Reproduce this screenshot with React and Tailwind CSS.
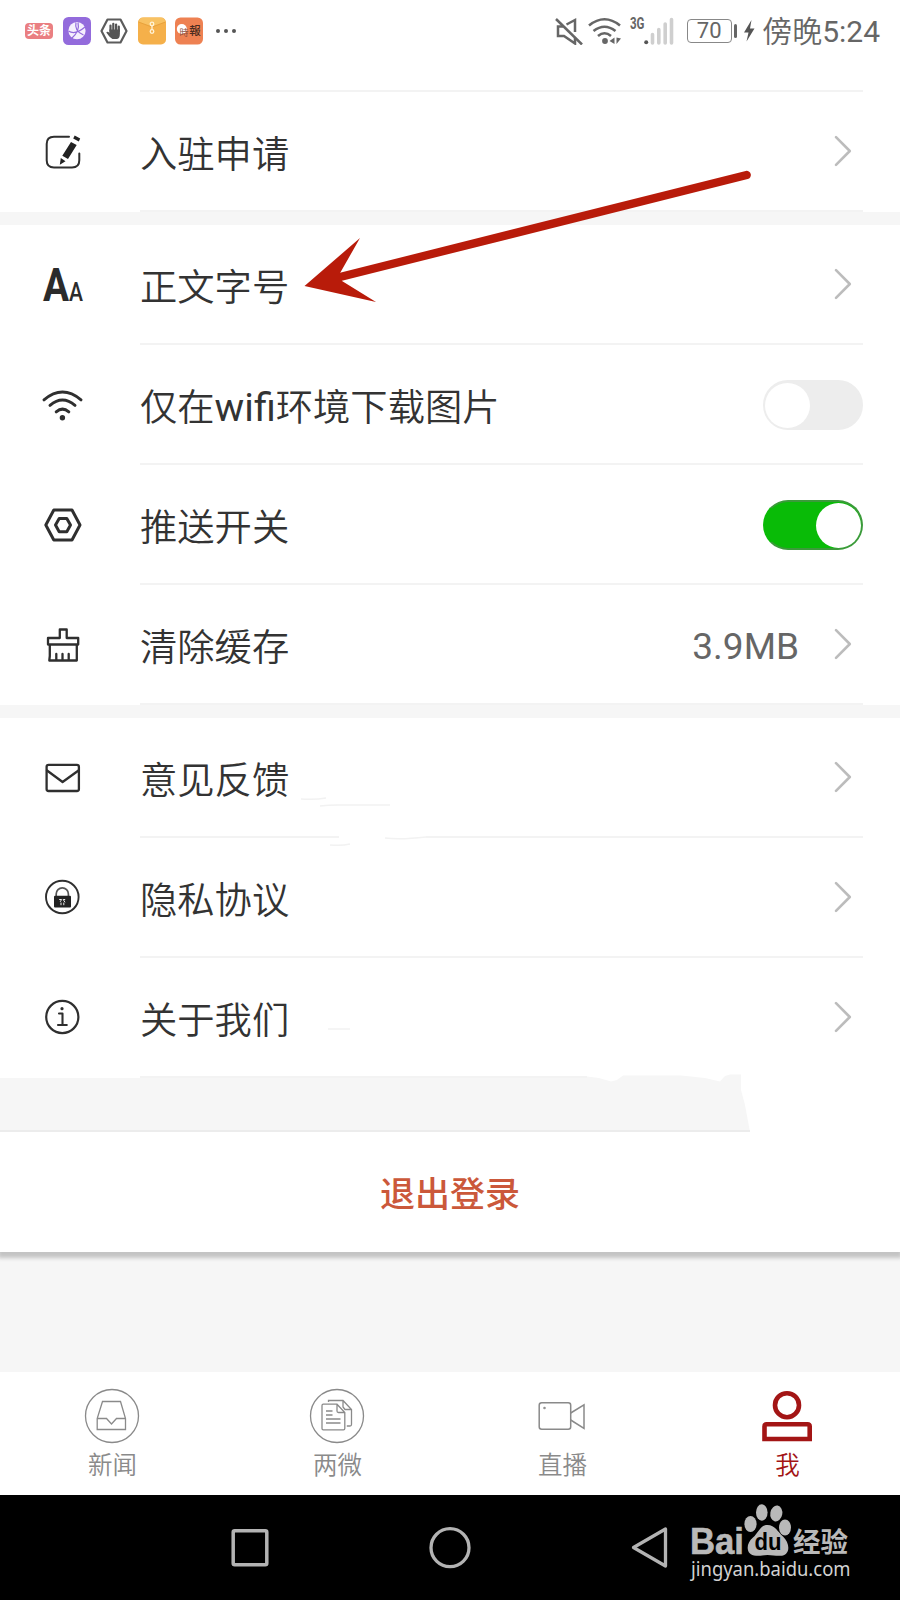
import React from 'react';

const cjk = "font-[Roboto,'Noto_Sans_CJK_SC',sans-serif]";

/* ---------- row icons ---------- */

const RowIcon = ({ children }) => (
  <svg width="42" height="40" viewBox="0 0 42 40" fill="none" stroke="#2f2f2f" strokeLinejoin="round" strokeLinecap="round" className="shrink-0 overflow-visible">
    {children}
  </svg>
);

const EditIcon = () => (
  <RowIcon>
    <path d="M27 4.8H12Q4.7 4.8 4.7 12V28.300Q4.700 35.500 12 35.500H30Q37.300 35.500 37.300 28.300V21.500" strokeWidth="2" />
    <g fill="#222" stroke="none">
      <path d="M29 10 34.700 13 26 27 20.300 23.800ZM18.800 26 23.500 29.200 17.800 32.800ZM32.700 3.500 38.200 6.600 36.800 9.600 31.200 6.600Z" />
    </g>
  </RowIcon>
);

const FontSizeIcon = () => (
  <RowIcon>
    <text x="1" y="36" fill="#2b2b2b" stroke="none" fontFamily="Roboto, sans-serif" fontWeight="700" fontSize="46" textLength="40" lengthAdjust="spacingAndGlyphs">
      A<tspan fontSize="25" fontWeight="500">A</tspan>
    </text>
  </RowIcon>
);

const WifiIcon = () => (
  <RowIcon>
    <g strokeWidth="3">
      <path d="M2 14.800Q20.500 -.8 39 14.800M8 20.300Q20.500 9.800 33 20.300M14.200 26.800Q20.500 21.500 26.800 26.800" />
    </g>
    <circle cx="20.400" cy="32.700" r="2.700" fill="#2f2f2f" stroke="none" />
  </RowIcon>
);

const NutIcon = () => (
  <RowIcon>
    <path d="M3.800 20 11.800 5H30L38 20 30 35H11.800Z" strokeWidth="3" />
    <path d="M13.500 20 17.200 13.500H24.800L28.500 20 24.800 26.800H17.200Z" strokeWidth="3" />
  </RowIcon>
);

const BrushIcon = () => (
  <RowIcon>
    <g strokeWidth="2.300">
      <path d="M17.800 13V4.500H24.700V13H36.200V19.500H6V13ZM7.800 19.500V31L7.300 35.500H34.800V19.500M14.300 35V29M20.500 35V29M26.700 35V29" />
    </g>
  </RowIcon>
);

const MailIcon = () => (
  <RowIcon>
    <rect x="4.600" y="6.800" width="32.300" height="26.200" rx="2" strokeWidth="2.300" />
    <path d="M5 12.500 20.600 24 36.500 12.500" strokeWidth="2.300" />
  </RowIcon>
);

const LockIcon = () => (
  <RowIcon>
    <circle cx="20.300" cy="19" r="16.300" strokeWidth="1.900" />
    <path d="M14.200 18.500V16A6 6 0 0 1 26.400 16V18.500" stroke="#555" strokeWidth="1.700" />
    <rect x="12" y="17.700" width="17" height="11.700" rx="1" fill="#222" stroke="none" />
    <path d="M17.600 21.500h2l-1.200 2M22.800 21.500h-1.600l1.600 2.500M19 25v1.800M21.800 25v1.800" stroke="#eee" strokeWidth="1" />
  </RowIcon>
);

const InfoIcon = () => (
  <RowIcon>
    <circle cx="20.300" cy="19" r="16.100" strokeWidth="2.200" />
    <circle cx="20" cy="10.700" r="1.600" fill="#2f2f2f" stroke="none" />
    <path d="M17 15.500H20.500V27M16 27H24.800" strokeWidth="2.100" />
  </RowIcon>
);

const Chevron = () => (
  <svg width="18" height="32" viewBox="0 0 18 32" fill="none" stroke="#bcbcbc" strokeWidth="2.600" strokeLinecap="round" strokeLinejoin="round" className="mr-[11px] shrink-0">
    <path d="M2 2.200 15.800 16 2 29.800" />
  </svg>
);

const Toggle = ({ on }) => (
  <div className={on
    ? 'w-[100px] h-[50px] mt-0.5 rounded-full bg-[#09bb07] border-2 border-[#3b9a3a] border-l-[#09bb07] flex items-center justify-end'
    : 'w-[100px] h-[50px] mt-0.5 rounded-full bg-[#ededed] border-2 border-[#ededed] flex items-center'}
  >
    <div className="w-[45px] h-[45px] rounded-full bg-white" />
  </div>
);

const groups = [
  [{ icon: EditIcon, label: '入驻申请' }],
  [
    { icon: FontSizeIcon, label: '正文字号' },
    { icon: WifiIcon, label: <>仅在<span className="font-normal text-[39.500px]">wifi</span>环境下载图片</>, toggle: 'off' },
    { icon: NutIcon, label: '推送开关', toggle: 'on' },
    { icon: BrushIcon, label: '清除缓存', value: '3.9MB' },
  ],
  [
    { icon: MailIcon, label: '意见反馈' },
    { icon: LockIcon, label: '隐私协议' },
    { icon: InfoIcon, label: '关于我们' },
  ],
];

function Row({ item }) {
  const Icon = item.icon;
  return (
    <div className="h-[120px] pl-[42px] pr-[37px] flex items-center bg-white">
      <Icon />
      <div className="ml-14 h-full flex-1 flex items-center justify-between border-b-2 border-[#f3f3f3]">
        <span className="text-[37.300px] leading-[56px] font-[350] text-[#333] mt-[7px]">{item.label}</span>
        {item.toggle ? (
          <Toggle on={item.toggle === 'on'} />
        ) : (
          <div className="flex items-center">
            {item.value && <span className="text-[37px] leading-[44px] text-[#666] mr-[35px] mt-1.5">{item.value}</span>}
            <Chevron />
          </div>
        )}
      </div>
    </div>
  );
}

/* ---------- status bar ---------- */

function StatusBar() {
  return (
    <div className="h-[60px] pt-px pl-[25px] pr-5 flex items-center justify-between text-[#666]">
      <div className="flex items-center gap-[9.500px]">
        <div className="w-7 h-4 rounded bg-[#ea7f82] flex items-center justify-center text-[12px] leading-4 font-bold text-white">头条</div>
        <svg width="28" height="28" viewBox="0 0 28 28" fill="none">
          <rect width="28" height="28" rx="5.500" fill="#936bdc" />
          <circle cx="14" cy="13.700" r="8.600" fill="#f5effd" />
          <path d="M13 5.500Q11 14 20.500 18M5.500 14Q12 18.500 22 10M15 5.500Q17 14 9 21" stroke="#936bdc" strokeWidth="1.200" />
        </svg>
        <svg width="28" height="28" viewBox="0 0 28 28" fill="none" strokeLinecap="round">
          <path d="M7.500 2.500H20.500L26.500 14 20.500 25.500H7.500L1.500 14Z" stroke="#5c5c5c" strokeWidth="2.200" strokeLinejoin="round" />
          <path d="M10.500 14V8.500M13.300 13V6.800M16.100 13V7.500M18.800 14V9.500" stroke="#555" strokeWidth="2.200" />
          <path d="M9.400 12.500H19.900V16.500Q19.900 21.500 17 22H12.500Q9.800 20.500 6.300 15.500 7.200 14 9.400 15.800Z" fill="#555" />
        </svg>
        <svg width="28" height="28" viewBox="0 0 28 28" fill="none">
          <rect y=".5" width="28" height="27" rx="5" fill="#f5b04a" />
          <path d="M1 5Q1 .5 6 .5H22Q27 .5 27 5L14 10Z" fill="#f8c263" />
          <path d="M.5 5 14 10 27.500 5" stroke="#e39c36" strokeWidth=".8" />
          <circle cx="14" cy="7" r="1.800" stroke="#fff3d8" strokeWidth="1.300" />
          <circle cx="14" cy="14.500" r="1.800" stroke="#fff3d8" strokeWidth="1.300" />
          <path d="M14 8.500V13" stroke="#fff3d8" strokeWidth="1.300" />
        </svg>
        <svg width="28" height="28" viewBox="0 0 28 28">
          <rect y=".5" width="28" height="27" rx="5.500" fill="#ee8152" />
          <circle cx="6.800" cy="12" r="5" fill="#fff" />
          <text x="4.500" y="19" fontSize="9" fill="#8a5040" fontFamily="Noto Sans CJK SC, sans-serif">時</text>
          <text x="14.200" y="18.300" fontSize="11.500" fontWeight="500" fill="#4b2c20" fontFamily="Noto Sans CJK SC, sans-serif">報</text>
        </svg>
        <div className="ml-[3px] flex gap-[4.400px]">
          <i className="w-1 h-1 rounded-full bg-[#555]" />
          <i className="w-1 h-1 rounded-full bg-[#555]" />
          <i className="w-1 h-1 rounded-full bg-[#555]" />
        </div>
      </div>

      <div className="flex items-center">
        <svg width="28" height="28" viewBox="0 0 28 28" fill="none" stroke="#666" strokeWidth="2.500">
          <path d="M1 2 27 27.500" />
          <path d="M8 9.500H3V19H9L20 26.500V21M11.500 7.500 20 3V15" />
        </svg>
        <svg width="34" height="28" viewBox="0 0 34 28" fill="none" stroke="#666" strokeWidth="2.600" className="ml-[5px]">
          <path d="M1 8.500Q16.500-4 32 8.500M5.500 14Q16.500 5.500 27.500 14M10 19Q16.500 13.500 23 19" />
          <circle cx="17" cy="24" r="2.900" fill="#666" stroke="none" />
          <path d="M26.500 20.500V27L21.500 24ZM28.500 20.500V27L33 21.500Z" fill="#666" stroke="none" />
        </svg>
        <svg width="44" height="28" viewBox="0 0 44 28" className="ml-2 mr-px overflow-visible">
          <text x="0" y="12" fontSize="16" fontWeight="700" fill="#666" fontFamily="Roboto, sans-serif" textLength="14.500" lengthAdjust="spacingAndGlyphs">3G</text>
          <circle cx="16.200" cy="25.200" r="2" fill="#555" />
          <path d="M22.500 17.500V26M28.800 12.500V26M35.200 7V26M41.500 2.500V26" stroke="#cfcfcf" strokeWidth="3.600" strokeLinecap="round" />
        </svg>
        <div className="ml-3 w-[45px] h-6 rounded-[4px] border-[1.500px] border-[#888] flex items-center justify-center text-[22px] leading-none">70</div>
        <i className="ml-0.5 w-[3.500px] h-3.5 rounded-sm bg-[#666]" />
        <svg width="12" height="22" viewBox="0 0 12 22" className="ml-[6px]">
          <path d="M8.500 0 1 12.500H5.500L3.500 21.500 11.500 8.500H7Z" fill="#555" />
        </svg>
        <span className="ml-[7px] text-[30px] leading-[44px] font-[350] mt-0.5">傍晚<span className="font-normal">5:24</span></span>
      </div>
    </div>
  );
}

/* ---------- bottom tabs ---------- */

const tabs = [
  {
    label: '新闻',
    icon: (
      <g strokeWidth="1.300">
        <circle cx="28" cy="28" r="26.500" />
        <path d="M18.500 13.500H36.500L41.500 30.500V41.500H13.200V30.500ZM13.200 30.500H22.500L27.500 36 32.500 30.500H41.500" />
      </g>
    ),
  },
  {
    label: '两微',
    icon: (
      <g strokeWidth="1.300">
        <circle cx="28" cy="28" r="26.500" />
        <path d="M13 17.500Q13 16.200 14.300 16.200H28L35.800 24.500V40.500Q35.800 41.800 34.500 41.800H14.300Q13 41.800 13 40.500ZM28 16.200V23Q28 24.500 29.500 24.500H35.800" />
        <path d="M19.500 14V12.500H34L42.500 21.500V36.500Q42.500 38 41 38H37.800M34 12.500V19L36 21.500H42.500" />
        <path d="M17 23H23.500M17 27H23.500M17 31H31.500M17 35H31.500" />
      </g>
    ),
  },
  {
    label: '直播',
    icon: (
      <g strokeWidth="1.500">
        <rect x="5.200" y="14.800" width="31.500" height="26.500" rx="2.500" />
        <path d="M36.700 25 50 16.800V40.500L36.700 32" />
        <circle cx="10.500" cy="20" r=".5" />
      </g>
    ),
  },
  {
    label: '我',
    active: true,
    icon: (
      <g strokeWidth="4.600">
        <circle cx="28" cy="17.200" r="12" />
        <path d="M5.500 51V38.500Q5.500 36.300 7.700 36.300H48.500Q50.700 36.300 50.700 38.500V51Z" />
      </g>
    ),
  },
];

function TabBar() {
  return (
    <div className="h-[123px] grid grid-cols-4 bg-white">
      {tabs.map((tab) => (
        <div key={tab.label} className={tab.active ? 'flex flex-col items-center pt-4 text-[#a31515]' : 'flex flex-col items-center pt-4 text-[#8a8a8a]'}>
          <svg width="56" height="56" viewBox="0 0 56 56" fill="none" stroke="currentColor" className="-ml-px">{tab.icon}</svg>
          <span className="mt-1 text-[24.500px] leading-9 font-[350]">{tab.label}</span>
        </div>
      ))}
    </div>
  );
}

function NavBar() {
  return (
    <div className="h-[105px] bg-black flex items-center pl-[230px]">
      <svg width="40" height="42" viewBox="0 0 40 42" fill="none" stroke="#b3b3b3" strokeWidth="3.500">
        <rect x="3.200" y="3.700" width="33.600" height="34" rx="1.500" />
      </svg>
      <svg width="44" height="44" viewBox="0 0 44 44" fill="none" stroke="#b3b3b3" strokeWidth="3.300" className="ml-[158px]">
        <circle cx="22" cy="21.700" r="19" />
      </svg>
      <svg width="38" height="44" viewBox="0 0 38 44" fill="none" stroke="#b3b3b3" strokeWidth="3.300" strokeLinejoin="round" className="ml-[158px]">
        <path d="M35.500 3V40L3.500 21.500Z" />
      </svg>
      <svg width="164" height="82" viewBox="0 9 164 82" fill="#b9b9b9" className="ml-[22px] overflow-visible">
        <text x="0" y="56" fontSize="37" fontWeight="700" stroke="#b9b9b9" strokeWidth=".6" fontFamily="Liberation Sans, sans-serif" textLength="54" lengthAdjust="spacingAndGlyphs">Bai</text>
        <ellipse cx="60.500" cy="26" rx="6.100" ry="8" />
        <ellipse cx="71.800" cy="14.500" rx="5.800" ry="8.200" />
        <ellipse cx="86.300" cy="15.500" rx="6" ry="8" transform="rotate(10 86.300 15.500)" />
        <ellipse cx="95" cy="29.500" rx="6" ry="8" />
        <path d="M77.500 27C85 27 88 34 93 38.500 101 46 100 58 90 57.800 86 58 82 57 77.500 57 73 57 70 58 66 57.800 56 57.500 55 46 63 39.500 69 34 70 27 77.500 27Z" />
        <text x="64.500" y="52" fontSize="24" fontWeight="700" fill="#000" fontFamily="Liberation Sans, sans-serif" textLength="27" lengthAdjust="spacingAndGlyphs">du</text>
        <text x="103" y="54" fontSize="27.500" fontWeight="700" fontFamily="Noto Sans CJK SC, sans-serif">经验</text>
        <text x="1" y="78" fontSize="20.500" fill="#d2d2d2" fontFamily="Noto Sans, sans-serif" textLength="159.500" lengthAdjust="spacingAndGlyphs">jingyan.baidu.com</text>
      </svg>
    </div>
  );
}

export default function App() {
  return (
    <div className={`relative w-[900px] h-[1600px] overflow-hidden bg-[#f6f6f6] ${cjk}`}>
      <div className="bg-white">
        <StatusBar />
        <div className="h-8 ml-[140px] mr-[37px] border-b-2 border-[#f3f3f3]" />
      </div>

      <div className="flex flex-col gap-[13px]">
        {groups.map((rows, i) => (
          <div key={i}>
            {rows.map((item, j) => <Row key={j} item={item} />)}
          </div>
        ))}
      </div>

      {/* gap above the logout button, worn away on its right side */}
      <div className="relative h-[54px] border-b-2 border-[#ececec]">
        <svg width="313" height="62" viewBox="0 0 313 62" className="absolute right-0 -top-2">
          <rect width="313" height="62" fill="#fff" />
          <path d="M0 6.500 12 8 24 11.500 30 10 36 5.500H94L118 8 133 11.500 138 6 143 4.500H154V20L158 35 163 62H0Z" fill="#f6f6f6" />
          <path d="M0 61H163" stroke="#ececec" strokeWidth="2" />
        </svg>
      </div>

      <div className="h-[120px] bg-white flex items-center justify-center shadow-[0_4px_4px_2px_#c4c4c4]">
        <span className="text-[35px] leading-[52px] font-medium text-[#cb583a] mt-2">退出登录</span>
      </div>

      <div className="h-[120px]" />
      <TabBar />
      <NavBar />

      <svg width="460" height="140" viewBox="0 0 460 140" className="absolute left-[300px] top-[170px]" fill="#b81b0a">
        <path d="M446.700 5 40 107" stroke="#b81b0a" strokeWidth="8.300" strokeLinecap="round" />
        <path d="M4.500 116 60 68 39.500 104 42 111 76 132Z" />
      </svg>

      {/* faint scratches */}
      <svg width="140" height="244" viewBox="0 0 140 244" className="absolute left-[300px] top-[792px]" fill="none" stroke="#f2f2f2" strokeWidth="1.500">
        <path d="M39 45H126" stroke="#fff" strokeWidth="4" />
        <path d="M1 7Q15 8 26 6M20 14Q28 13 38 13H90M30 53Q42 54 50 52M85 46Q100 48 126 45M28 237H50" />
      </svg>
    </div>
  );
}
